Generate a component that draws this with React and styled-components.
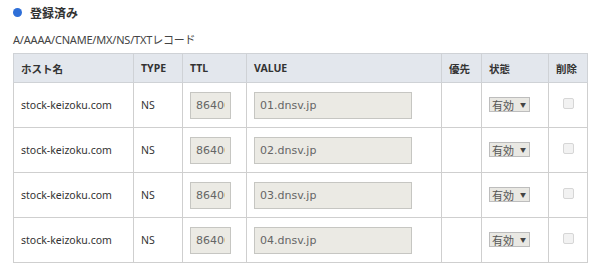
import React from "react";
import styled, { createGlobalStyle } from "styled-components";

const GlobalStyle = createGlobalStyle`
  body {
    margin: 0;
    background: #fff;
    font-family: "Noto Sans", "Noto Sans CJK JP", sans-serif;
    color: #333;
  }
`;

const records = [
  { host: "stock-keizoku.com", type: "NS", ttl: "86400", value: "01.dnsv.jp" },
  { host: "stock-keizoku.com", type: "NS", ttl: "86400", value: "02.dnsv.jp" },
  { host: "stock-keizoku.com", type: "NS", ttl: "86400", value: "03.dnsv.jp" },
  { host: "stock-keizoku.com", type: "NS", ttl: "86400", value: "04.dnsv.jp" },
];

const App = () => {
  return (
    <Wrapper>
      <GlobalStyle />
      <Title>登録済み</Title>
      <Caption>A/AAAA/CNAME/MX/NS/TXTレコード</Caption>
      <Table>
        <colgroup>
          <col style={{ width: 120 }} />
          <col style={{ width: 49 }} />
          <col style={{ width: 64 }} />
          <col style={{ width: 195 }} />
          <col style={{ width: 40 }} />
          <col style={{ width: 67 }} />
          <col style={{ width: 39 }} />
        </colgroup>
        <thead>
          <tr>
            <Th>ホスト名</Th>
            <Th>TYPE</Th>
            <Th>TTL</Th>
            <Th>VALUE</Th>
            <Th>優先</Th>
            <Th>状態</Th>
            <Th>削除</Th>
          </tr>
        </thead>
        <tbody>
          {records.map((r, i) => (
            <tr key={i}>
              <Td>{r.host}</Td>
              <Td>{r.type}</Td>
              <Td>
                <Field $width={41} defaultValue={r.ttl} readOnly />
              </Td>
              <Td>
                <Field $width={158} defaultValue={r.value} readOnly />
              </Td>
              <Td />
              <Td>
                <Select>
                  有効<Arrow>▼</Arrow>
                </Select>
              </Td>
              <Td $center>
                <Check />
              </Td>
            </tr>
          ))}
        </tbody>
      </Table>
    </Wrapper>
  );
};

const Wrapper = styled.div`
  width: 600px;
  height: 277px;
  padding: 4px 13px 0;
  box-sizing: border-box;
  overflow: hidden;
`;

const Title = styled.div`
  display: flex;
  align-items: center;
  height: 17px;
  font-size: 12px;
  font-weight: bold;
  color: #333;
  &::before {
    content: "";
    width: 9px;
    height: 9px;
    border-radius: 50%;
    background: #2e6fd8;
    margin-right: 8px;
  }
`;

const Caption = styled.div`
  margin-top: 12px;
  font-size: 11px;
  line-height: 14px;
  color: #444;
  letter-spacing: -0.2px;
`;

const Table = styled.table`
  margin-top: 6px;
  width: 575px;
  border-collapse: collapse;
  table-layout: fixed;
  font-size: 10.5px;
`;

const Th = styled.th`
  height: 28px;
  padding: 0 7px;
  background: #e3e7ed;
  border: 1px solid #cfd2d6;
  text-align: left;
  font-weight: bold;
  font-size: 10.5px;
  color: #333;
`;

const Td = styled.td`
  height: 44px;
  padding: 0 7px;
  border: 1px solid #cfcfcf;
  color: #333;
  text-align: ${(p) => (p.$center ? "center" : "left")};
`;

const Field = styled.input`
  display: block;
  width: ${(p) => p.$width}px;
  height: 27px;
  box-sizing: border-box;
  padding: 0 5px;
  background: #ebeae4;
  border: 1px solid #c6c6c2;
  font-family: "DejaVu Sans", "Noto Sans CJK JP", sans-serif;
  font-size: 11px;
  color: #666;
  outline: none;
`;

const Select = styled.div`
  display: inline-flex;
  align-items: center;
  width: 41px;
  height: 15px;
  box-sizing: border-box;
  padding: 0 2px;
  background: #e9e8e3;
  border: 1px solid #bdbdbd;
  font-size: 11px;
  color: #555;
`;

const Arrow = styled.span`
  margin-left: 6px;
  font-size: 6px;
  color: #444;
`;

const Check = styled.div`
  display: inline-block;
  width: 9px;
  height: 9px;
  border: 1px solid #d6d6d6;
  background: #f2f2f2;
  border-radius: 2px;
`;

export default App;
